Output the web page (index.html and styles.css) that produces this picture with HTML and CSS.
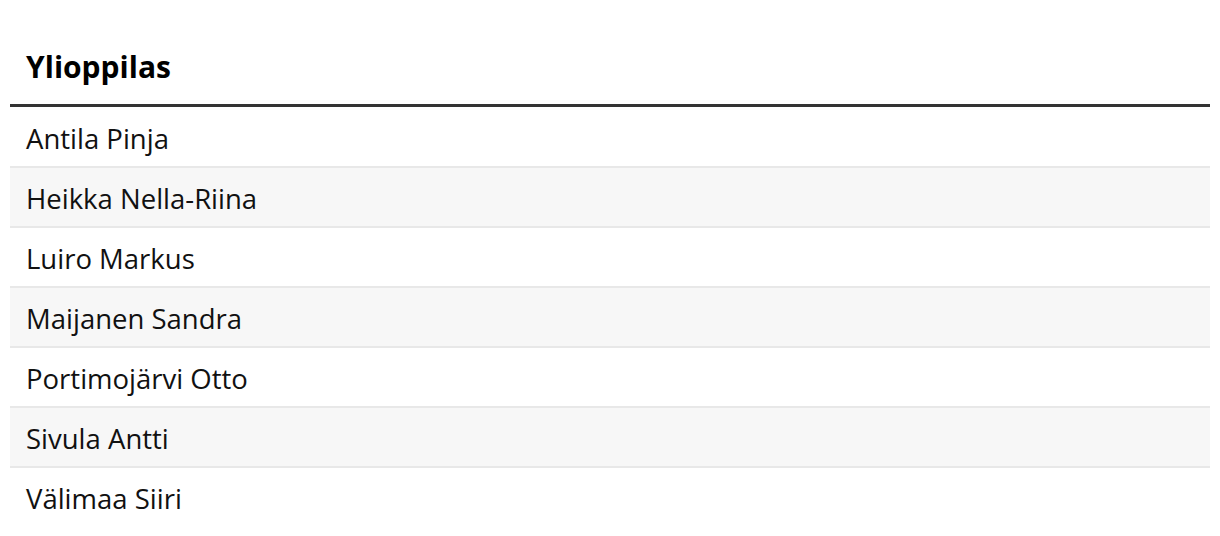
FILE: index.html
```html
<!DOCTYPE html>
<html lang="fi">
<head>
<meta charset="utf-8">
<title>Ylioppilas</title>
<link rel="stylesheet" href="styles.css">
</head>
<body>
<table class="students">
  <thead>
    <tr><th class="head-cell">Ylioppilas</th></tr>
  </thead>
  <tbody>
    <tr class="row"><td class="cell">Antila Pinja</td></tr>
    <tr class="row"><td class="cell">Heikka Nella-Riina</td></tr>
    <tr class="row"><td class="cell">Luiro Markus</td></tr>
    <tr class="row"><td class="cell">Maijanen Sandra</td></tr>
    <tr class="row"><td class="cell">Portimojärvi Otto</td></tr>
    <tr class="row"><td class="cell">Sivula Antti</td></tr>
    <tr class="row"><td class="cell">Välimaa Siiri</td></tr>
  </tbody>
</table>
</body>
</html>
```
FILE: styles.css
```css
html, body {
  margin: 0;
  padding: 0;
  background: #ffffff;
}
body {
  padding: 47px 10px 0 10px;
  font-family: "Open Sans", "Noto Sans", sans-serif;
  color: #111111;
}
.students {
  width: 100%;
  border-collapse: collapse;
  border-spacing: 0;
}
.head-cell {
  text-align: left;
  font-weight: 700;
  font-size: 30px;
  line-height: 40px;
  padding: 0 16px 17px 16px;
  border-bottom: 3px solid #333333;
  color: #000000;
}
.cell {
  font-size: 27.5px;
  line-height: 40px;
  height: 58px;
  box-sizing: border-box;
  padding: 11px 16px 7px 16px;
  vertical-align: middle;
}
.row {
  border-bottom: 2px solid #e8e8e8;
}
.row:first-child .cell {
  height: 60px;
  padding-top: 12px;
}
.row:last-child {
  border-bottom: none;
}
.row:nth-child(even) {
  background: #f7f7f7;
}
```
